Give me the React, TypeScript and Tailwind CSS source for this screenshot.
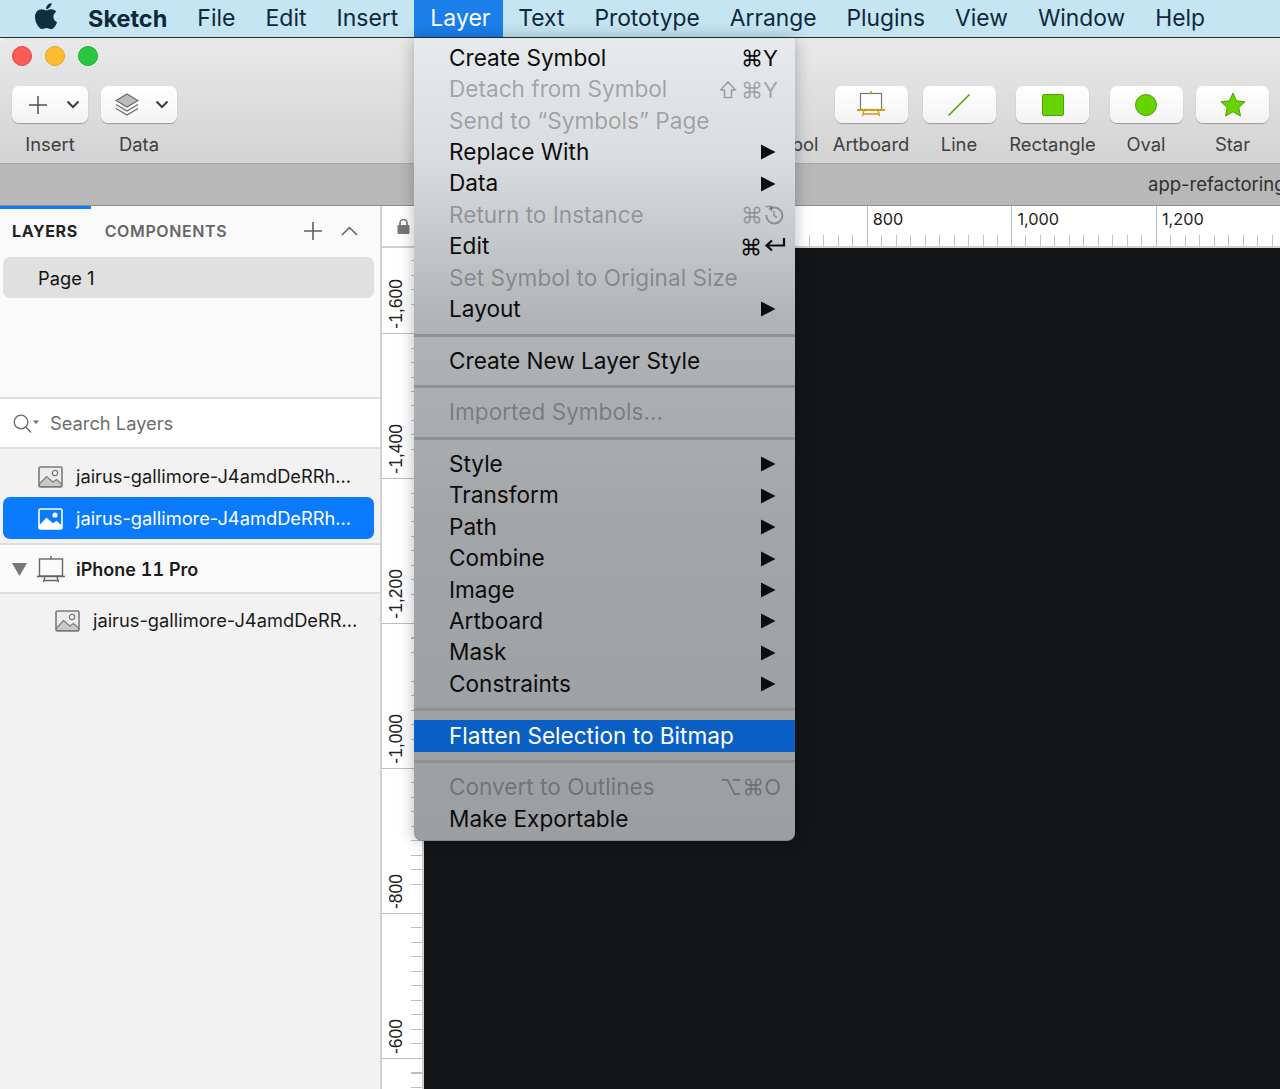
import { FaApple } from "react-icons/fa";

const MENU_BAR = ["File", "Edit", "Insert"];
const MENU_BAR_RIGHT = ["Text", "Prototype", "Arrange", "Plugins", "View", "Window", "Help"];

type MenuRow =
  | { sep: true }
  | { label: string; off?: boolean; sub?: boolean; keys?: React.ReactNode; hot?: boolean };

const ShiftIcon = () => (
  <svg width="18" height="20" viewBox="0 0 18 20" className="mr-[4px]" fill="none" stroke="currentColor" strokeWidth="1.6">
    <path d="M9 2 L16.5 10 H12.5 V17.5 H5.5 V10 H1.5 Z" strokeLinejoin="round" />
  </svg>
);

const UndoIcon = () => (
  <svg width="20" height="20" viewBox="0 0 20 20" className="ml-[1px] mr-[-6px]" fill="none" stroke="currentColor" strokeWidth="2">
    <path d="M5 4.5 A8 8 0 1 1 2.3 10" />
    <path d="M1.5 1.5 L7.5 1.5 L7.5 6.5" strokeWidth="1.6" />
    <path d="M10 6 V10.5 L13 12.5" strokeWidth="1.6" />
  </svg>
);

const ReturnIcon = () => (
  <svg width="22" height="18" viewBox="0 0 22 18" className="ml-[2px] mr-[-8px] mb-[4px]" fill="none" stroke="currentColor" strokeWidth="2.2">
    <path d="M20 2 V9.5 H3" />
    <path d="M8 4.5 L2.5 9.5 L8 14.5" />
  </svg>
);

const LAYER_MENU: MenuRow[] = [
  { label: "Create Symbol", keys: <span>⌘Y</span> },
  { label: "Detach from Symbol", off: true, keys: <><ShiftIcon /><span>⌘Y</span></> },
  { label: "Send to “Symbols” Page", off: true },
  { label: "Replace With", sub: true },
  { label: "Data", sub: true },
  { label: "Return to Instance", off: true, keys: <><span>⌘</span><UndoIcon /></> },
  { label: "Edit", keys: <><span>⌘</span><ReturnIcon /></> },
  { label: "Set Symbol to Original Size", off: true },
  { label: "Layout", sub: true },
  { sep: true },
  { label: "Create New Layer Style" },
  { sep: true },
  { label: "Imported Symbols...", off: true },
  { sep: true },
  { label: "Style", sub: true },
  { label: "Transform", sub: true },
  { label: "Path", sub: true },
  { label: "Combine", sub: true },
  { label: "Image", sub: true },
  { label: "Artboard", sub: true },
  { label: "Mask", sub: true },
  { label: "Constraints", sub: true },
  { sep: true },
  { label: "Flatten Selection to Bitmap", hot: true },
  { sep: true },
  { label: "Convert to Outlines", off: true, keys: <span className="mr-[-3px]">⌥⌘O</span> },
  { label: "Make Exportable" },
];

function LayerMenu() {
  return (
    <div className="absolute left-[414px] top-[38px] z-20 w-[381px] h-[803px] rounded-b-[8px] pt-[4.5px] bg-[linear-gradient(180deg,#e7eaed_0%,#dadde0_15%,#b1b4b7_35%,#a3a6a9_60%,#9c9fa2_100%)] shadow-[0_0_16px_rgba(0,0,0,0.28)] border-b border-[#85888b]">
      {LAYER_MENU.map((row, i) => {
        if ("sep" in row) {
          return (
            <div key={i} className="h-[20.3px] flex items-center">
              <div className="h-[3px] w-full bg-[#8f9295]" />
            </div>
          );
        }
        return (
          <div
            key={i}
            className={`h-[31.4px] flex items-center pl-[35px] pr-[17px] justify-between text-[22.6px] leading-none whitespace-nowrap ${
              row.hot ? "bg-[#0a5fc4] text-white" : row.off ? "text-black/30" : "text-[#0c0c0c]"
            }`}
          >
            <span>{row.label}</span>
            {row.keys && <span className="flex items-center text-[22px] font-['Inter','DejaVu_Sans',sans-serif]">{row.keys}</span>}
            {row.sub && (
              <svg width="16" height="16" viewBox="0 0 16 16" className="mr-[2px]">
                <polygon points="1,0.5 15.5,8 1,15.5" fill="#0c0c0c" />
              </svg>
            )}
          </div>
        );
      })}
    </div>
  );
}

function MenuBar() {
  return (
    <div className="h-[38px] shrink-0 flex items-stretch bg-[#c5e5f3] border-b border-[#1d2f38] text-[#10283a] text-[23px] leading-none">
      <div className="w-[73px] pl-[31px] flex items-center">
        <FaApple className="text-[30px] text-[#0f2e3e] mt-[-5px]" />
      </div>
      <div className="px-[15px] flex items-center font-bold text-[23.5px]">Sketch</div>
      {MENU_BAR.map((m) => (
        <div key={m} className="px-[15px] flex items-center">{m}</div>
      ))}
      <div className="w-[89px] ml-[1px] px-[16px] flex items-center bg-[#1b7fe9] text-white">Layer</div>
      {MENU_BAR_RIGHT.map((m) => (
        <div key={m} className="px-[15px] flex items-center text-[22.8px]">{m}</div>
      ))}
    </div>
  );
}

const Chevron = () => (
  <svg width="14" height="9" viewBox="0 0 14 9" fill="none" stroke="#3c3c3c" strokeWidth="2">
    <path d="M1.5 1.5 L7 7 L12.5 1.5" />
  </svg>
);

const ToolButton = ({ className, children }: { className: string; children: React.ReactNode }) => (
  <div className={`h-[37px] rounded-[7px] bg-[linear-gradient(180deg,#ffffff,#f3f3f3)] shadow-[0_1px_1px_rgba(0,0,0,0.3)] flex items-center ${className}`}>
    {children}
  </div>
);

function ToolItem({ label, width, icon }: { label: string; width: string; icon: React.ReactNode }) {
  return (
    <div className={`flex flex-col items-center ${width}`}>
      <ToolButton className="w-[73px] justify-center">{icon}</ToolButton>
      <div className="mt-[9px] text-[18.4px] leading-[24px] text-[#404040] whitespace-nowrap">{label}</div>
    </div>
  );
}

function Toolbar() {
  return (
    <div className="h-[126px] shrink-0 bg-[linear-gradient(180deg,#e9e9e9,#d3d3d3)] border-b border-[#a9a9a9] rounded-tl-[6px]">
      <div className="h-[48px] pl-[12px] pt-[8px] flex gap-[13px]">
        <div className="w-[20px] h-[20px] rounded-full bg-[#fc5c57] border border-[#e2463f]" />
        <div className="w-[20px] h-[20px] rounded-full bg-[#fdbb2e] border border-[#e0a225]" />
        <div className="w-[20px] h-[20px] rounded-full bg-[#28c83f] border border-[#1eae2f]" />
      </div>
      <div className="flex justify-between pl-[12px] pr-[11px]">
        <div className="flex gap-[13px]">
          <div className="flex flex-col items-center">
            <ToolButton className="w-[76px] pl-[16px] pr-[8px] justify-between">
              <svg width="20" height="20" viewBox="0 0 20 20" stroke="#505050" strokeWidth="1.5">
                <path d="M10 1 V19 M1 10 H19" />
              </svg>
              <Chevron />
            </ToolButton>
            <div className="mt-[9px] text-[18.4px] leading-[24px] text-[#404040]">Insert</div>
          </div>
          <div className="flex flex-col items-center">
            <ToolButton className="w-[76px] pl-[14px] pr-[8px] justify-between">
              <svg width="24" height="23" viewBox="0 0 24 23" fill="none" stroke="#6a6a6a" strokeWidth="1.2">
                <path d="M12 1 L23 7.5 L12 14 L1 7.5 Z" fill="#bdbdbd" />
                <path d="M1 11.5 L12 18 L23 11.5" />
                <path d="M1 15.5 L12 22 L23 15.5" />
              </svg>
              <Chevron />
            </ToolButton>
            <div className="mt-[9px] text-[18.4px] leading-[24px] text-[#404040]">Data</div>
          </div>
        </div>
        <div className="flex gap-[13.5px]">
          <div className="pt-[46px] text-[18.4px] leading-[24px] text-[#404040] mr-[1px]">Symbol</div>
          <ToolItem
            label="Artboard"
            width="w-[76px]"
            icon={
              <svg width="28" height="27" viewBox="0 0 28 27" fill="none">
                <rect x="3.5" y="2.5" width="21" height="16" fill="#fff" stroke="#777" strokeWidth="1.2" />
                <path d="M14 0 V2.5" stroke="#d19a10" strokeWidth="1.6" />
                <path d="M0 19 H28" stroke="#d19a10" strokeWidth="2" />
                <path d="M7 19 L5.5 25 M21 19 L22.5 25 M6 23 H22" stroke="#d19a10" strokeWidth="1.4" />
              </svg>
            }
          />
          <ToolItem
            label="Line"
            width="w-[73px]"
            icon={
              <svg width="22" height="22" viewBox="0 0 22 22">
                <path d="M0.5 21.5 L21.5 0.5" stroke="#4f9f05" strokeWidth="1.5" />
              </svg>
            }
          />
          <ToolItem
            label="Rectangle"
            width="w-[87px]"
            icon={<div className="w-[22px] h-[22px] rounded-[2px] bg-[#66d400] border border-[#4f9f05]" />}
          />
          <ToolItem
            label="Oval"
            width="w-[73px]"
            icon={<div className="w-[22px] h-[22px] rounded-full bg-[#66d400] border border-[#4f9f05]" />}
          />
          <ToolItem
            label="Star"
            width="w-[73px]"
            icon={
              <svg width="26" height="25" viewBox="0 0 26 25">
                <polygon
                  points="13,1 16.6,8.8 25,9.8 18.8,15.6 20.5,24 13,19.8 5.5,24 7.2,15.6 1,9.8 9.4,8.8"
                  fill="#66d400"
                  stroke="#4f9f05"
                  strokeWidth="1"
                />
              </svg>
            }
          />
        </div>
      </div>
    </div>
  );
}

function ImageIcon({ selected }: { selected?: boolean }) {
  const frame = selected ? "#ffffff" : "#7a7a7a";
  return (
    <svg width="25" height="22" viewBox="0 0 25 22" fill="none" className="shrink-0">
      <rect x="1" y="1" width="23" height="20" rx="1.5" fill={selected ? "#0a7aff" : "#ececec"} stroke={frame} strokeWidth="1.6" />
      <circle cx="17" cy="7" r="2.6" fill={selected ? "#fff" : "#f8f8f8"} stroke={frame} strokeWidth={selected ? 0 : 1.2} />
      <path
        d="M1.5 18 L8.5 10.5 L15 16 L18.5 13.5 L23.5 18 V20.5 H1.5 Z"
        fill={selected ? "#fff" : "#c9c9c9"}
        stroke={selected ? "#fff" : "#7a7a7a"}
        strokeWidth="1.1"
      />
    </svg>
  );
}

function LayersPanel() {
  return (
    <div className="w-[380px] shrink-0 flex flex-col bg-[#f2f2f2] text-[18.3px] text-[#1b1b1b]">
      <div className="h-[191px] bg-[#fafafa] flex flex-col">
        <div className="h-[3px] w-[91px] bg-[#0a7aff]" />
        <div className="h-[48px] pl-[12px] pr-[22px] pb-[4px] flex items-center text-[16px] tracking-[0.6px]">
          <span className="font-bold text-[#222]">LAYERS</span>
          <span className="ml-[27px] font-semibold text-[#666]">COMPONENTS</span>
          <svg width="20" height="20" viewBox="0 0 20 20" className="ml-auto" stroke="#606060" strokeWidth="1.6">
            <path d="M10 1 V19 M1 10 H19" />
          </svg>
          <svg width="17" height="10" viewBox="0 0 17 10" className="ml-[18px]" fill="none" stroke="#606060" strokeWidth="1.5">
            <path d="M1 9 L8.5 1.5 L16 9" />
          </svg>
        </div>
        <div className="mx-[3px] mr-[6px] h-[41px] pt-[2px] rounded-[7px] bg-[#e0e0e0] pl-[35px] flex items-center text-[#111]">Page 1</div>
      </div>
      <div className="h-[52px] pt-[2px] bg-white border-y-[2px] border-[#dfdfdf] pl-[13px] flex items-center text-[#6d6d6d]">
        <svg width="27" height="20" viewBox="0 0 27 20" fill="none" stroke="#6a6a6a" strokeWidth="1.3">
          <circle cx="8" cy="8" r="6.8" />
          <path d="M13 13 L18 18.5" />
          <polygon points="20,6.5 26,6.5 23,10" fill="#6a6a6a" stroke="none" />
        </svg>
        <span className="ml-[10px]">Search Layers</span>
      </div>
      <div className="h-[94px] pt-[6px] flex flex-col">
        <div className="h-[42px] pt-[2px] pl-[38px] flex items-center gap-[13px] whitespace-nowrap">
          <ImageIcon />
          <span>jairus-gallimore-J4amdDeRRh...</span>
        </div>
        <div className="mx-[3px] mr-[6px] h-[42px] pt-[1px] rounded-[7px] bg-[#0a7aff] pl-[35px] flex items-center gap-[13px] text-white whitespace-nowrap">
          <ImageIcon selected />
          <span>jairus-gallimore-J4amdDeRRh...</span>
        </div>
      </div>
      <div className="h-[51px] bg-[#fafafa] border-y-[2px] border-[#dedede] pl-[12px] pt-[2px] flex items-center font-semibold text-[18px] tabular-nums">
        <svg width="15" height="13" viewBox="0 0 15 13">
          <polygon points="0,0 15,0 7.5,13" fill="#787878" />
        </svg>
        <svg width="28" height="27" viewBox="0 0 28 27" className="ml-[10px]" fill="none" stroke="#666" strokeWidth="1.4">
          <rect x="2.5" y="3" width="23" height="17" fill="#fafafa" />
          <path d="M14 0 V3 M0 20.5 H28 M8 20.5 L6.5 26 M20 20.5 L21.5 26 M6.5 24.5 H21.5" />
        </svg>
        <span className="ml-[11px]">iPhone 11 Pro</span>
      </div>
      <div className="h-[54px] pl-[55px] flex items-center gap-[13px] whitespace-nowrap">
        <ImageIcon />
        <span>jairus-gallimore-J4amdDeRR...</span>
      </div>
    </div>
  );
}

const TOP_LABELS = ["", "", "", "800", "1,000", "1,200"];
const SIDE_LABELS = ["-1,600", "-1,400", "-1,200", "-1,000", "-800", "-600", ""];

function TopRuler() {
  return (
    <div className="flex-1 flex pl-[9px] overflow-hidden bg-white border-b-[2px] border-[#cfcfcf]">
      {TOP_LABELS.map((l, i) => (
        <div key={i} className="w-[144.6px] shrink-0 border-l border-[#bdbdbd] flex flex-col">
          <div className="flex-1 pl-[5px] pt-[3px] text-[16.3px] leading-[20px] text-[#222]">{l}</div>
          <div className="h-[11px] bg-[repeating-linear-gradient(90deg,transparent_0_13.46px,#c2c2c2_13.46px_14.46px)]" />
        </div>
      ))}
    </div>
  );
}

function SideRuler() {
  return (
    <div className="w-[42px] shrink-0 overflow-hidden bg-white border-r-[2px] border-[#cfcfcf]">
      <div className="mt-[-59px]">
        {SIDE_LABELS.map((l, i) => (
          <div key={i} className="h-[145px] border-b border-[#bdbdbd] flex">
            <div className="flex-1 flex items-end justify-center pb-[4px]">
              <span className="[writing-mode:vertical-rl] rotate-180 font-['Liberation_Sans',sans-serif] text-[17.5px] leading-none text-[#222]">{l}</span>
            </div>
            <div className="w-[11px] bg-[repeating-linear-gradient(180deg,transparent_0_13.5px,#bdbdbd_13.5px_14.5px)]" />
          </div>
        ))}
      </div>
    </div>
  );
}

export default function App() {
  return (
    <div className="relative w-[1280px] h-[1089px] overflow-hidden flex flex-col bg-[#f2f2f2] font-['Inter',sans-serif]">
      <MenuBar />
      <Toolbar />
      <div className="h-[42px] shrink-0 bg-[#b8b8b8] border-b border-[#8f8f8f] pl-[1148px] flex items-center text-[18.5px] text-[#303030] whitespace-nowrap">
        app-refactoring
      </div>
      <div className="flex-1 flex min-h-0">
        <LayersPanel />
        <div className="flex-1 flex flex-col border-l-[2px] border-[#d2d2d2] min-w-0">
          <div className="h-[42px] shrink-0 flex">
            <div className="w-[42px] shrink-0 bg-white border-b-[2px] border-[#cfcfcf] border-r border-r-[#e2e2e2] pl-[15px] pt-[13px]">
              <svg width="13" height="15" viewBox="0 0 13 15">
                <rect x="0.5" y="6" width="12" height="9" rx="1" fill="#777" />
                <path d="M3 6 V4 A3.5 3.5 0 0 1 10 4 V6" fill="none" stroke="#777" strokeWidth="1.6" />
              </svg>
            </div>
            <TopRuler />
          </div>
          <div className="flex-1 flex min-h-0">
            <SideRuler />
            <div className="flex-1 bg-[#141517]" />
          </div>
        </div>
      </div>
      <LayerMenu />
    </div>
  );
}
